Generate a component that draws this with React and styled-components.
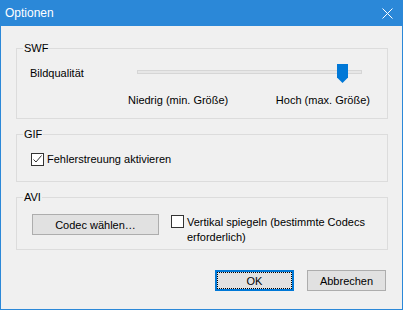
import React from 'react';
import styled, { createGlobalStyle } from 'styled-components';

const Global = createGlobalStyle`
  html, body { margin: 0; padding: 0; background: #f0f0f0; }
  body { font-family: "Liberation Sans", Arial, sans-serif; }
`;

const Window = styled.div`
  width: 403px;
  height: 310px;
  box-sizing: border-box;
  border: 1px solid #2b88d8;
  border-top: none;
  background: #f0f0f0;
  display: flex;
  flex-direction: column;
  font-family: "Liberation Sans", Arial, sans-serif;
  font-size: 11px;
  color: #000;
`;

const TitleBar = styled.div`
  height: 26px;
  background: #2b88d8;
  display: flex;
  align-items: center;
  justify-content: space-between;
  padding-left: 4px;
  color: #fff;
  font-size: 12px;
`;

const Close = styled.div`
  width: 30px;
  height: 26px;
  display: flex;
  align-items: center;
  justify-content: center;
`;

const Content = styled.div`
  display: flex;
  flex-direction: column;
  gap: 8px;
  padding: 15px 14px 0 15px;
`;

const Group = styled.fieldset`
  margin: 0;
  padding: 0;
  min-width: 0;
  border: 1px solid #dcdcdc;
`;

const Legend = styled.legend`
  margin-left: 6px;
  padding: 0 1px;
  line-height: 14px;
  font-size: 11px;
`;

const SwfBody = styled.div`
  display: grid;
  grid-template-columns: 98px 242px;
  row-gap: 10px;
  padding: 9px 16px 11px 13px;
`;

const RowLabel = styled.div`
  height: 19px;
  line-height: 19px;
`;

const Slider = styled.div`
  height: 19px;
  box-sizing: border-box;
  padding: 6px 8px 0 9px;
`;

const Track = styled.div`
  position: relative;
  height: 4px;
  box-sizing: border-box;
  background: #e7e7e7;
  border: 1px solid #d6d6d6;
`;

const Thumb = styled.svg`
  position: absolute;
  top: -7px;
  display: block;
`;

const Scale = styled.div`
  display: flex;
  justify-content: space-between;
  line-height: 14px;
`;

const GifBody = styled.div`
  padding: 11px 0 15px 14px;
`;

const CheckRow = styled.label`
  display: flex;
  align-items: ${p => (p.$top ? 'flex-start' : 'center')};
  gap: 3px;
`;

const Box = styled.span`
  width: 13px;
  height: 13px;
  box-sizing: border-box;
  border: 1px solid #333;
  background: #fff;
  flex: none;
  display: flex;
  margin-top: ${p => (p.$offset ? `${p.$offset}px` : '0')};
`;

const CheckText = styled.span`
  line-height: ${p => (p.$lh ? `${p.$lh}px` : '14px')};
  margin-top: ${p => (p.$offset ? `${p.$offset}px` : '0')};
`;

const AviBody = styled.div`
  display: flex;
  align-items: flex-start;
  gap: 12px;
  padding: 10px 0 4px 15px;
`;

const Button = styled.button`
  position: relative;
  width: ${p => p.$w || 79}px;
  height: 21px;
  box-sizing: border-box;
  margin: 0;
  padding: 0;
  background: #e1e1e1;
  border: ${p => (p.$default ? '2px solid #0078d7' : '1px solid #adadad')};
  font-family: inherit;
  font-size: 11px;
  color: #000;
  &::after {
    content: '';
    display: ${p => (p.$default ? 'block' : 'none')};
    position: absolute;
    inset: 0;
    border: 1px dotted #000;
  }
`;

const Footer = styled.div`
  display: flex;
  justify-content: flex-end;
  gap: 13px;
  margin-top: 20px;
  padding-right: 16px;
`;

const CheckMark = () => (
  <svg width="11" height="11" viewBox="0 0 11 11">
    <path d="M1.5 5.5 L4 8 L9.5 1.5" fill="none" stroke="#333" strokeWidth="1" />
  </svg>
);

const TRACK = 225;
const THUMB = 11;

export default function App() {
  const quality = 0.935;
  return (
    <>
      <Global />
      <Window>
        <TitleBar>
          <span>Optionen</span>
          <Close>
            <svg width="11" height="11" viewBox="0 0 11 11">
              <path d="M0.5 0.5 L10.5 10.5 M10.5 0.5 L0.5 10.5" stroke="#fff" strokeWidth="1" />
            </svg>
          </Close>
        </TitleBar>
        <Content>
          <Group>
            <Legend>SWF</Legend>
            <SwfBody>
              <RowLabel>Bildqualität</RowLabel>
              <Slider>
                <Track>
                  <Thumb
                    width="11"
                    height="19"
                    viewBox="0 0 11 19"
                    style={{ left: Math.round(quality * (TRACK - THUMB)) - 1 }}
                  >
                    <path d="M0 0 H11 V13.5 L5.5 19 L0 13.5 Z" fill="#0078d7" />
                  </Thumb>
                </Track>
              </Slider>
              <span />
              <Scale>
                <span>Niedrig (min. Größe)</span>
                <span>Hoch (max. Größe)</span>
              </Scale>
            </SwfBody>
          </Group>
          <Group>
            <Legend>GIF</Legend>
            <GifBody>
              <CheckRow>
                <Box>
                  <CheckMark />
                </Box>
                <CheckText>Fehlerstreuung aktivieren</CheckText>
              </CheckRow>
            </GifBody>
          </Group>
          <Group>
            <Legend>AVI</Legend>
            <AviBody>
              <Button $w={127}>Codec wählen…</Button>
              <CheckRow $top>
                <Box $offset={1} />
                <CheckText $lh={15} $offset={1}>
                  Vertikal spiegeln (bestimmte Codecs
                  <br />
                  erforderlich)
                </CheckText>
              </CheckRow>
            </AviBody>
          </Group>
        </Content>
        <Footer>
          <Button $default>OK</Button>
          <Button>Abbrechen</Button>
        </Footer>
      </Window>
    </>
  );
}
